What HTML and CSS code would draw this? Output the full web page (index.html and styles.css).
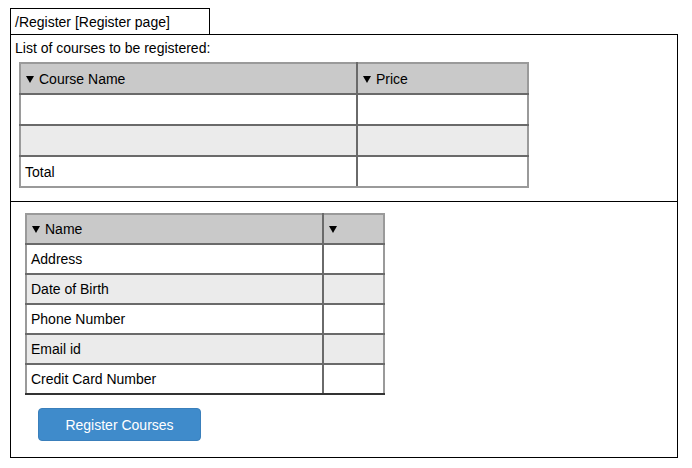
FILE: index.html
```html
<!DOCTYPE html>
<html lang="en">
<head>
  <meta charset="UTF-8">
  <title>Register</title>
  <link rel="stylesheet" href="styles.css">
</head>
<body>
  <div class="page">
    <div class="tab">/Register [Register page]</div>
    <div class="frame">
      <section class="courses">
        <div class="label">List of courses to be registered:</div>
        <table class="grid course-grid">
          <tr class="head">
            <td class="c1"><span class="arrow"></span>Course Name</td>
            <td class="c2"><span class="arrow"></span>Price</td>
          </tr>
          <tr><td></td><td></td></tr>
          <tr class="alt"><td></td><td></td></tr>
          <tr><td>Total</td><td></td></tr>
        </table>
      </section>
      <section class="details">
        <table class="grid detail-grid">
          <tr class="head">
            <td class="c1"><span class="arrow"></span>Name</td>
            <td class="c2"><span class="arrow"></span></td>
          </tr>
          <tr><td>Address</td><td></td></tr>
          <tr class="alt"><td>Date of Birth</td><td></td></tr>
          <tr><td>Phone Number</td><td></td></tr>
          <tr class="alt"><td>Email id</td><td></td></tr>
          <tr class="last"><td>Credit Card Number</td><td></td></tr>
        </table>
        <button class="register-btn">Register Courses</button>
      </section>
    </div>
  </div>
</body>
</html>
```

FILE: styles.css
```css
body { margin: 0; background: #fff; font-family: "Liberation Sans", Arial, sans-serif; font-size: 14px; color: #000; }
.page { padding: 8px 0 0 10px; }
.tab {
  width: 194px; height: 25px;
  border: 1px solid #000; border-bottom: none;
  padding-left: 4px; line-height: 26px;
}
.frame { width: 666px; border: 1px solid #000; }
.courses { border-bottom: 1px solid #000; padding: 5px 0 13px 4px; }
.label { line-height: 16px; }
.grid { border-collapse: collapse; }
.grid td { border: 2px solid #6a6a6a; padding: 0 4px; line-height: 16px; }
.grid tr:first-child td { border-top-color: #9a9a9a; }
.grid td:first-child { border-left-color: #9a9a9a; }
.grid td:last-child { border-right-color: #9a9a9a; }
.grid .head td { background: #c9c9c9; }
.grid .alt td { background: #ebebeb; }
.course-grid { margin: 6px 0 0 4px; }
.course-grid tr { height: 31px; }
.course-grid tr:last-child td { border-bottom-color: #9a9a9a; }
.course-grid .c1 { width: 327px; }
.course-grid .c2 { width: 161px; }
.details { padding: 11px 0 16px 14px; }
.detail-grid tr { height: 30px; }
.detail-grid .last td { border-bottom-color: #333; }
.detail-grid .c1 { width: 287px; }
.detail-grid .c2 { width: 51px; }
.arrow {
  display: inline-block; width: 0; height: 0;
  border-left: 4px solid transparent; border-right: 4px solid transparent;
  border-top: 7px solid #000;
  margin: 0 5px 0 1px; vertical-align: 1px;
}
.register-btn {
  display: block; margin: 13px 0 0 13px;
  width: 163px; height: 33px;
  background: #3f8bcb; color: #fff;
  border: 1px solid #3a7fbb; border-radius: 4px;
  font-family: inherit; font-size: 14px;
}
```
